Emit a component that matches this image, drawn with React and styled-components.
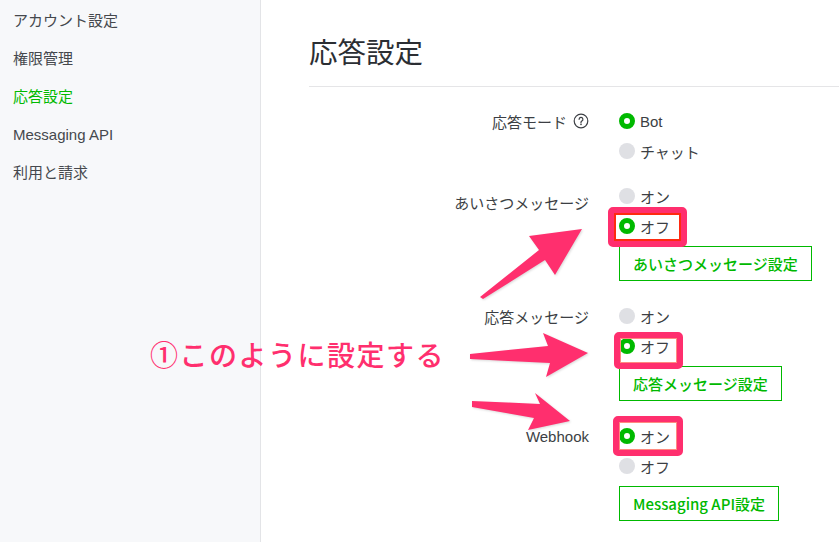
import React from 'react';
import styled, { createGlobalStyle } from 'styled-components';

const PINK = '#ff2f6e';
const GREEN = '#00b900';

const menu = [
  { label: 'アカウント設定' },
  { label: '権限管理' },
  { label: '応答設定', active: true },
  { label: 'Messaging API' },
  { label: '利用と請求' },
];

const rows = [
  {
    label: '応答モード',
    help: true,
    options: [
      { text: 'Bot', checked: true },
      { text: 'チャット' },
    ],
  },
  {
    label: 'あいさつメッセージ',
    offset: 6,
    options: [{ text: 'オン' }, { text: 'オフ', checked: true }],
    button: 'あいさつメッセージ設定',
  },
  {
    label: '応答メッセージ',
    options: [{ text: 'オン' }, { text: 'オフ', checked: true }],
    button: '応答メッセージ設定',
  },
  {
    label: 'Webhook',
    options: [{ text: 'オン', checked: true }, { text: 'オフ' }],
    button: 'Messaging API設定',
  },
];

const marks = [
  { x: 608, y: 207, w: 79, h: 40, strong: true },
  { x: 614, y: 332, w: 69, h: 37 },
  { x: 613, y: 416, w: 70, h: 40 },
];

const HelpIcon = () => (
  <svg width="16" height="16" viewBox="0 0 16 16">
    <circle cx="8" cy="8" r="6.8" fill="none" stroke="#3c3f44" strokeWidth="1.2" />
    <path
      d="M6.1 6.3a1.9 1.9 0 1 1 2.6 1.8c-.5.2-.7.6-.7 1.1v.5"
      fill="none"
      stroke="#3c3f44"
      strokeWidth="1.2"
      strokeLinecap="round"
    />
    <circle cx="8" cy="11.4" r="0.8" fill="#3c3f44" />
  </svg>
);

const Arrows = () => (
  <ArrowLayer width="839" height="542" viewBox="0 0 839 542">
    <polygon points="480,297 539,250 529,236 582,229 555,275 545,260 483,299" />
    <polygon points="470,354 548,346 543,333 588,353 546,377 550,363 470,359" />
    <polygon points="472,401 540,404 535,393 570,421 528,430 534,418 472,407" />
  </ArrowLayer>
);

const App = () => {
  return (
    <>
      <GlobalStyle />
      <Page>
        <Sidebar>
          {menu.map((item) => (
            <NavItem key={item.label} $active={item.active}>
              {item.label}
            </NavItem>
          ))}
        </Sidebar>
        <Main>
          <Title>応答設定</Title>
          <Form>
            {rows.map((row) => (
              <React.Fragment key={row.label}>
                <Label $offset={row.offset}>
                  {row.label}
                  {row.help && <HelpIcon />}
                </Label>
                <Options>
                  {row.options.map((opt) => (
                    <Option key={opt.text}>
                      <Dot $checked={opt.checked} />
                      {opt.text}
                    </Option>
                  ))}
                  {row.button && <SettingButton>{row.button}</SettingButton>}
                </Options>
              </React.Fragment>
            ))}
          </Form>
        </Main>

        {/* screenshot annotations */}
        <Overlay>
          {marks.map((m) => (
            <Mark key={m.y} $x={m.x} $y={m.y} $w={m.w} $h={m.h} $strong={m.strong} />
          ))}
          <Arrows />
          <Note>①このように設定する</Note>
        </Overlay>
      </Page>
    </>
  );
};

export default App;

const GlobalStyle = createGlobalStyle`
  body {
    margin: 0;
    font-family: "Liberation Sans", "Noto Sans CJK JP", sans-serif;
    background: #fff;
  }
`;

const Page = styled.div`
  position: relative;
  display: flex;
  height: 542px;
  overflow: hidden;
`;

const Sidebar = styled.nav`
  width: 261px;
  flex-shrink: 0;
  box-sizing: border-box;
  padding-top: 2px;
  background: #f7f8fa;
  border-right: 1px solid #e3e4e7;
`;

const NavItem = styled.div`
  height: 38px;
  line-height: 38px;
  padding-left: 13px;
  font-size: 15px;
  color: ${(p) => (p.$active ? GREEN : '#45484d')};
`;

const Main = styled.main`
  flex: 1;
  padding-left: 48px;
`;

const Title = styled.h1`
  margin: 0;
  padding: 31px 0 11px;
  font-size: 28.5px;
  line-height: 44px;
  font-weight: 400;
  color: #2b2e33;
  border-bottom: 1px solid #e5e5e7;
`;

const Form = styled.div`
  display: grid;
  grid-template-columns: 280px 1fr;
  column-gap: 30px;
  row-gap: 15px;
  padding-top: 19px;
`;

const Label = styled.div`
  display: flex;
  justify-content: flex-end;
  align-items: center;
  align-self: start;
  gap: 6px;
  height: 30px;
  padding-top: ${(p) => p.$offset || 0}px;
  font-size: 15px;
  color: #3c3f44;
`;

const Options = styled.div`
  display: flex;
  flex-direction: column;
  align-items: flex-start;
`;

const Option = styled.label`
  display: flex;
  align-items: center;
  gap: 5px;
  height: 30px;
  font-size: 15px;
  color: #3c3f44;
`;

const Dot = styled.span`
  width: 16px;
  height: 16px;
  box-sizing: border-box;
  border-radius: 50%;
  background: ${(p) => (p.$checked ? '#fff' : '#dfe0e4')};
  border: ${(p) => (p.$checked ? `5px solid ${GREEN}` : 'none')};
`;

const SettingButton = styled.div`
  display: flex;
  align-items: center;
  box-sizing: border-box;
  height: 35px;
  margin: 5px 0 5px;
  padding: 0 13px;
  background: #fff;
  border: 1px solid #00b900;
  color: ${GREEN};
  font-family: "Noto Sans CJK JP", sans-serif;
  font-size: 15px;
  font-weight: 500;
`;

const Overlay = styled.div`
  position: absolute;
  inset: 0;
  pointer-events: none;
`;

const Mark = styled.div`
  position: absolute;
  left: ${(p) => p.$x}px;
  top: ${(p) => p.$y}px;
  width: ${(p) => p.$w}px;
  height: ${(p) => p.$h}px;
  box-sizing: border-box;
  border: 6px solid ${PINK};
  border-radius: 5px;
  box-shadow: inset 0 0 0 ${(p) => (p.$strong ? '2px #ff2a10' : '1px #ff8a80')};
`;

const ArrowLayer = styled.svg`
  position: absolute;
  left: 0;
  top: 0;
  fill: ${PINK};
  filter: drop-shadow(1px 1px 1px rgba(0, 0, 0, 0.15));
`;

const Note = styled.div`
  position: absolute;
  left: 150px;
  top: 337px;
  font-family: "Noto Sans CJK JP", sans-serif;
  font-size: 28px;
  line-height: 34px;
  font-weight: 500;
  letter-spacing: 1.5px;
  color: ${PINK};
  white-space: nowrap;
`;
